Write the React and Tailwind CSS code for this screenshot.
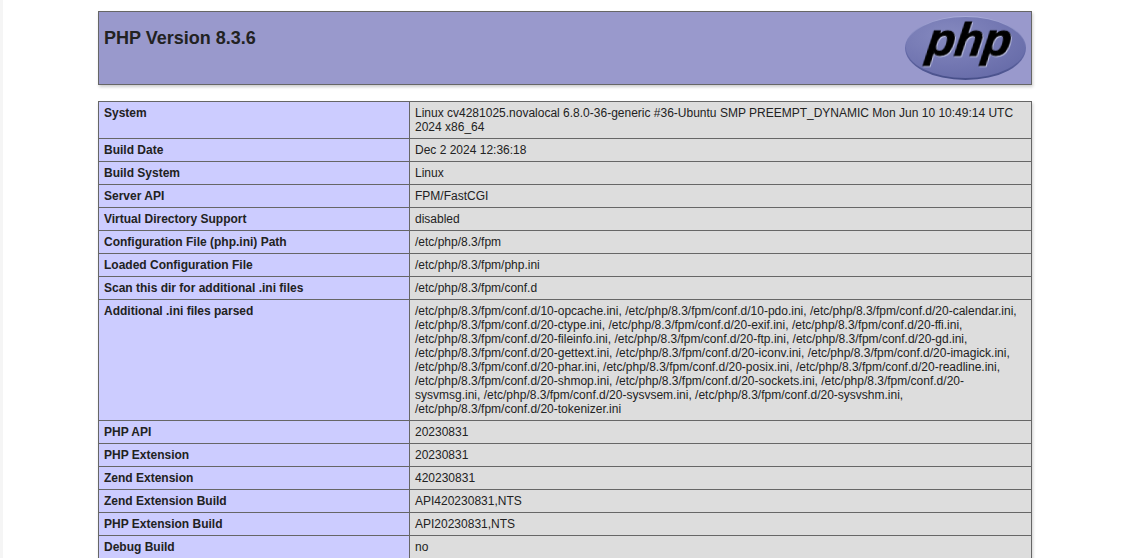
import React from 'react';

const rows = [
  ['System', 'Linux cv4281025.novalocal 6.8.0-36-generic #36-Ubuntu SMP PREEMPT_DYNAMIC Mon Jun 10 10:49:14 UTC 2024 x86_64'],
  ['Build Date', 'Dec 2 2024 12:36:18'],
  ['Build System', 'Linux'],
  ['Server API', 'FPM/FastCGI'],
  ['Virtual Directory Support', 'disabled'],
  ['Configuration File (php.ini) Path', '/etc/php/8.3/fpm'],
  ['Loaded Configuration File', '/etc/php/8.3/fpm/php.ini'],
  ['Scan this dir for additional .ini files', '/etc/php/8.3/fpm/conf.d'],
  ['Additional .ini files parsed', '/etc/php/8.3/fpm/conf.d/10-opcache.ini, /etc/php/8.3/fpm/conf.d/10-pdo.ini, /etc/php/8.3/fpm/conf.d/20-calendar.ini, /etc/php/8.3/fpm/conf.d/20-ctype.ini, /etc/php/8.3/fpm/conf.d/20-exif.ini, /etc/php/8.3/fpm/conf.d/20-ffi.ini, /etc/php/8.3/fpm/conf.d/20-fileinfo.ini, /etc/php/8.3/fpm/conf.d/20-ftp.ini, /etc/php/8.3/fpm/conf.d/20-gd.ini, /etc/php/8.3/fpm/conf.d/20-gettext.ini, /etc/php/8.3/fpm/conf.d/20-iconv.ini, /etc/php/8.3/fpm/conf.d/20-imagick.ini, /etc/php/8.3/fpm/conf.d/20-phar.ini, /etc/php/8.3/fpm/conf.d/20-posix.ini, /etc/php/8.3/fpm/conf.d/20-readline.ini, /etc/php/8.3/fpm/conf.d/20-shmop.ini, /etc/php/8.3/fpm/conf.d/20-sockets.ini, /etc/php/8.3/fpm/conf.d/20-sysvmsg.ini, /etc/php/8.3/fpm/conf.d/20-sysvsem.ini, /etc/php/8.3/fpm/conf.d/20-sysvshm.ini, /etc/php/8.3/fpm/conf.d/20-tokenizer.ini'],
  ['PHP API', '20230831'],
  ['PHP Extension', '20230831'],
  ['Zend Extension', '420230831'],
  ['Zend Extension Build', 'API420230831,NTS'],
  ['PHP Extension Build', 'API20230831,NTS'],
  ['Debug Build', 'no'],
];

const PhpLogo = () => (
  <svg width="121" height="64" viewBox="0 0 121 64" className="block overflow-visible">
    <defs>
      <linearGradient id="logoRim" x1="0" y1="0" x2="0" y2="1">
        <stop offset="0" stopColor="#a9acd8" />
        <stop offset="0.5" stopColor="#6a6fad" />
        <stop offset="1" stopColor="#464e88" />
      </linearGradient>
      <radialGradient id="logoFill" cx="0.35" cy="0.3" r="0.8">
        <stop offset="0" stopColor="#8589bf" />
        <stop offset="0.6" stopColor="#7377b2" />
        <stop offset="1" stopColor="#666ba8" />
      </radialGradient>
    </defs>
    <ellipse cx="60.5" cy="32" rx="60.5" ry="32" fill="url(#logoRim)" />
    <ellipse cx="60.5" cy="31.5" rx="59.5" ry="30.5" fill="url(#logoFill)" />
    <text
      x="26"
      y="40"
      transform="skewX(-8)"
      fontFamily="'Liberation Sans', sans-serif"
      fontWeight="700"
      fontStyle="italic"
      fontSize="45"
      textLength="84"
      lengthAdjust="spacingAndGlyphs"
      fill="#000"
      stroke="#000"
      strokeWidth="1"
      className="drop-shadow-[1px_1px_0_rgba(215,217,240,0.75)]"
    >
      php
    </text>
  </svg>
);

export default function App() {
  return (
    <div className="flex h-[558px] overflow-hidden bg-white text-[#222] font-['Liberation_Sans',Arial,sans-serif]">
      <div className="w-[3px] shrink-0 bg-[#f5f5f5]" />
      <div className="flex-1 pl-[95px]">
        <table className="mt-[11px] w-[934px] table-fixed border-collapse text-left shadow-[1px_2px_3px_rgba(0,0,0,0.2)]">
          <tbody>
            <tr className="bg-[#99c]">
              <td className="border border-[#666] px-[5px] py-1 text-xs font-bold align-baseline">
                <div className="flex justify-between">
                  <h1 className="mt-3 text-[18px] leading-[21px] font-bold">PHP Version 8.3.6</h1>
                  <PhpLogo />
                </div>
              </td>
            </tr>
          </tbody>
        </table>
        <table className="mt-4 w-[934px] table-fixed border-collapse text-left shadow-[1px_2px_3px_rgba(0,0,0,0.2)]">
          <colgroup>
            <col className="w-[311px]" />
            <col />
          </colgroup>
          <tbody>
            {rows.map(([label, value]) => (
              <tr key={label}>
                <td className="border border-[#666] bg-[#ccf] px-[5px] py-1 text-xs leading-[14px] font-bold align-baseline">
                  {label}
                </td>
                <td className="border border-[#666] bg-[#ddd] px-[5px] py-1 text-xs leading-[14px] align-baseline break-words">
                  {value}
                </td>
              </tr>
            ))}
          </tbody>
        </table>
      </div>
    </div>
  );
}
